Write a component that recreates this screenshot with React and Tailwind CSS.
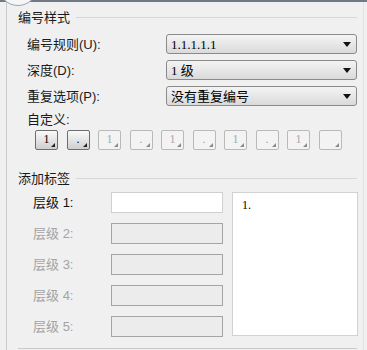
const FONT = { fontFamily: '"Liberation Sans", "Noto Sans CJK SC", sans-serif' };

function Select({ value, serif }) {
    return (
        <div className="ml-auto w-[191px] h-[20px] rounded-[3px] border border-[#8a8a8a] bg-gradient-to-b from-[#f4f4f4] to-[#dadada] flex items-center pl-[4px] pr-[5px]">
            <span className={"text-[13px] text-black leading-none " + (serif ? "font-['Liberation_Serif','Noto_Sans_CJK_SC',serif]" : "")}>{value}</span>
            <svg className="ml-auto" width="8" height="5" viewBox="0 0 8 5">
                <path d="M0 0H8L4 5Z" fill="#111" />
            </svg>
        </div>
    );
}

function FormRow({ label, children }) {
    return (
        <div className="flex items-center h-[20px] pl-[20px] pr-[6px]">
            <span className="text-[13px] text-[#1a1a1a] leading-none">{label}</span>
            {children}
        </div>
    );
}

function CustomButton({ text, enabled }) {
    return (
        <div className={"relative w-[23px] h-[20px] rounded-[2px] border flex items-center justify-center text-[12px] font-['Liberation_Serif',serif] leading-none " +
            (enabled ? "border-[#6e6e6e] bg-gradient-to-b from-[#fafafa] to-[#cfcfcf] text-black" : "border-[#b9b9b9] bg-[#f3f3f3] text-[#a8a8a8]")}>
            <span className="-mt-[2px]">{text}</span>
            <svg className="absolute right-[2px] bottom-[2px]" width="4" height="4" viewBox="0 0 4 4">
                <path d="M4 0V4H0Z" fill={enabled ? "#222" : "#8a8a8a"} />
            </svg>
        </div>
    );
}

function LevelRow({ n, enabled }) {
    return (
        <div className="flex items-center h-[21px]">
            <span className={"w-[104px] pl-[26px] text-[13px] leading-none " + (enabled ? "text-[#111]" : "text-[#a3a3a3]")}>
                层级 <span className="font-['Liberation_Sans',sans-serif]">{n}:</span>
            </span>
            <div className={"w-[112px] h-[21px] border " + (enabled ? "border-[#cfcfcf] bg-white" : "border-[#a5a5a5] bg-[#ececec]")}></div>
        </div>
    );
}

function GroupHeader({ title }) {
    return (
        <div className="flex items-center h-[14px] pl-[11px] pr-[6px]">
            <span className="text-[13px] text-[#1a1a1a] leading-none">{title}</span>
            <div className="flex-1 ml-[6px] h-px bg-[#d8d8d8]"></div>
        </div>
    );
}

export default function App() {
    const custom = [
        ["1", true], [".", true], ["1", false], [".", false], ["1", false],
        [".", false], ["1", false], [".", false], ["1", false], ["", false],
    ];

    return (
        <div className="relative w-[367px] h-[350px] bg-[#f0f0f0] overflow-hidden" style={FONT}>
            <div className="h-[2px] bg-[#6f7a86]"></div>
            <div className="absolute left-[-2px] top-[-34px] w-[40px] h-[40px] rounded-full border border-[#9aa3ab] bg-[#f6f6f6] flex items-end justify-center">
                <div className="w-[15px] h-[5px] bg-[#5d6670] mb-[31px] ml-[4px]"></div>
            </div>
            <div className="absolute right-[3px] top-[2px] bottom-0 w-px bg-[#e2e2e2]"></div>

            <div className="ml-[6px] mr-[4px] h-[348px] border-l border-[#c9c9c9] pt-[8px] flex flex-col">
                <GroupHeader title="编号样式" />
                <div className="mt-[10px] flex flex-col gap-[6px]">
                    <FormRow label="编号规则(U):"><Select value="1.1.1.1.1" serif /></FormRow>
                    <FormRow label="深度(D):"><Select value="1 级" serif /></FormRow>
                    <FormRow label="重复选项(P):"><Select value="没有重复编号" /></FormRow>
                </div>
                <div className="mt-[6px] pl-[20px] h-[14px] flex items-center text-[13px] text-[#1a1a1a] leading-none">自定义:</div>
                <div className="mt-[4px] pl-[28px] flex gap-[8.5px]">
                    {custom.map(([t, e], i) => <CustomButton key={i} text={t} enabled={e} />)}
                </div>

                <div className="mt-[21px]">
                    <GroupHeader title="添加标签" />
                </div>

                <div className="mt-[7px] flex">
                    <div className="flex flex-col gap-[10px]">
                        {[1, 2, 3, 4, 5].map((n) => <LevelRow key={n} n={n} enabled={n === 1} />)}
                    </div>
                    <div className="ml-[9px] w-[126px] h-[144px] border border-[#d2d2d2] bg-white pl-[9px] pt-[6px]">
                        <span className="block text-[12px] leading-none text-black font-['Liberation_Serif',serif]">1.</span>
                    </div>
                </div>
            </div>
            <div className="absolute left-[18px] right-[10px] top-[348px] h-px bg-[#c9c9c9]"></div>
        </div>
    );
}
